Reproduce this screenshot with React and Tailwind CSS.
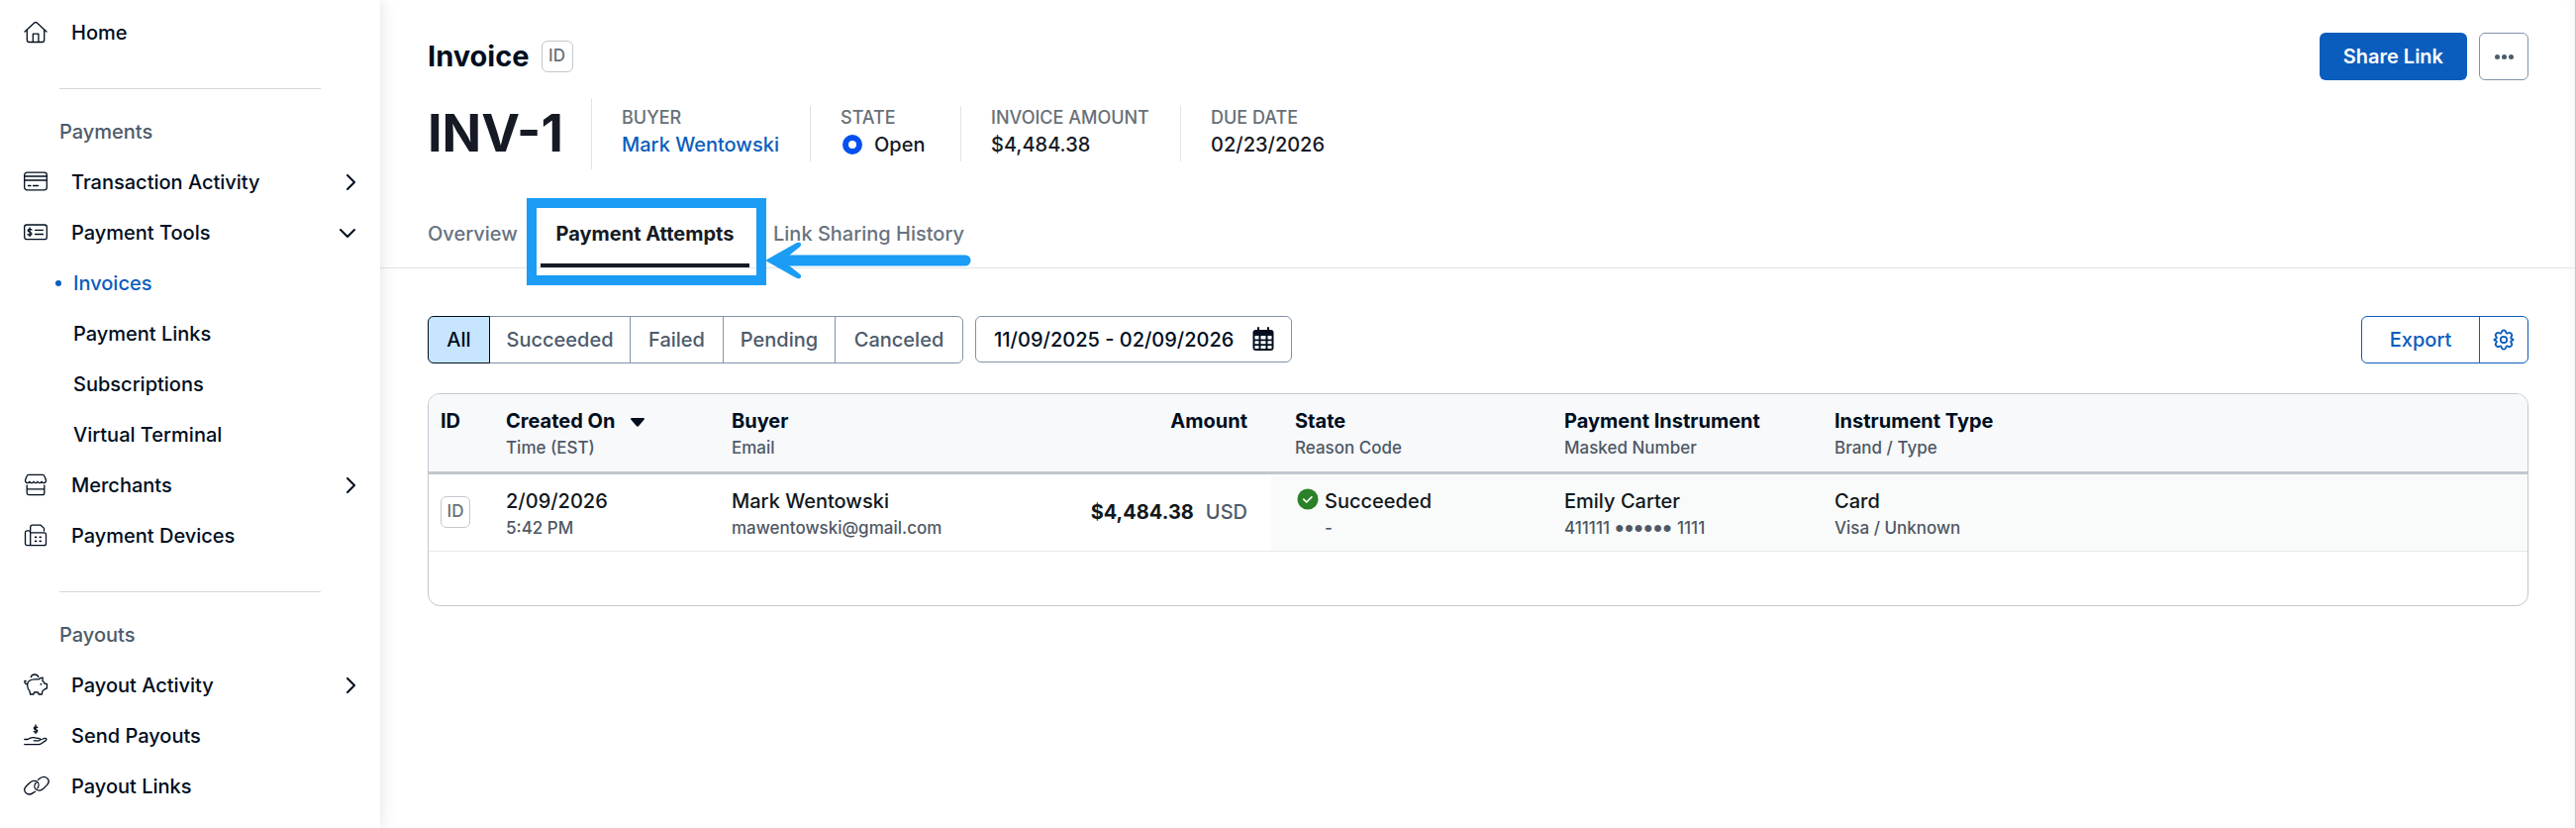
import React from 'react';

const SIDE_ICONS = {
  home: (
    <>
      <path d="M1 11 10.700 2.100a2 2 0 0 1 2.600 0L23 11" />
      <path d="M3.300 9.500v9.800A2.200 2.200 0 0 0 5.500 21.500h13a2.200 2.200 0 0 0 2.200-2.200V9.500" />
      <path d="M9.300 21.200v-8h5.600v8" />
    </>
  ),
  card: (
    <>
      <rect x="0.7" y="2.200" width="22.600" height="17.600" rx="2.500" />
      <path d="M1 6h22M1 10h22M4.500 15.500h2.500M9.500 15.500h5" />
    </>
  ),
  check: (
    <>
      <rect x="0.7" y="4" width="22.600" height="14.600" rx="2.200" />
      <path d="M8 9C7.400 8.100 4.200 7.900 4.200 9.700S8 11 8 12.900s-3.300 1.700-4 .7M6.100 7v8.600" />
      <path d="M11.500 9.300h8M11.500 13.500h8" />
    </>
  ),
  store: (
    <>
      <path d="M5 1.300h14c1 0 1.700.6 2 1.600l1.400 3.700c.4 1.800-.8 3-2.200 3-1 0-1.600-.7-2.100-1.300-.5.700-1.200 1.300-2.100 1.300S14.300 9 13.900 8.300c-.5.700-1.100 1.300-1.900 1.300S10.500 9 10.100 8.300c-.5.700-1.200 1.300-2.100 1.300S6.400 9 5.900 8.300c-.5.700-1.100 1.300-2.100 1.300-1.400 0-2.600-1.200-2.200-3L3 2.900c.3-1 1-1.600 2-1.600Z" />
      <path d="M3.200 12v7.700a2 2 0 0 0 2 2h13.600a2 2 0 0 0 2-2V12M3.200 15.800h17.600" />
    </>
  ),
  device: (
    <>
      <path d="M6.700 21.700H3.500a2 2 0 0 1-2-2V8.800a2 2 0 0 1 2-2h1.200a2 2 0 0 1 2 2v12.900h13.800a2 2 0 0 0 2-2v-8.900a2 2 0 0 0-2-2H6.700" />
      <path d="M6.700 7V3.200a2 2 0 0 1 2-2h8.400l3.400 3.200V7" />
      <path d="M11.700 13.300h.8M16.300 13.300h.8M11.700 17.300h.8M16.300 17.300h.8" strokeWidth="1.800" />
    </>
  ),
  pig: (
    <>
      <path d="M3.600 11.500C3.600 8 6.800 5.800 11.300 5.800h3.900c.9-1 2.300-1.600 4-1.700l-.3 3.200c1 .8 1.700 1.700 2 2.700l2.500.7v4.200l-3 1.400c-.4.700-1 1.300-1.600 1.700l-.4 3h-3.300l-.6-2h-4l-.6 2H6.600l-.7-3.300c-1.500-1.500-2.300-3.500-2.300-6.200Z" />
      <path d="M7.200 3.700C7.800 2 9.200 1 11 1s3.200.9 3.800 2.400M3.600 10.700C2 10.900.7 9.500.8 8.100c.1-.8 1-.9 1.400-.2" />
      <path d="M17.300 10.800h.1" strokeWidth="1.800" />
    </>
  ),
  hand: (
    <>
      <path d="M.8 15.500H4c2-1.500 3.500-1.900 5.500-1.900 1.500 0 2.400.7 4 .7H15c2 0 2 2.500.2 2.500h-5M16.500 16l4.300-1.500c1.800-.4 3 .9 1.500 2.100l-4.600 3.200c-.8.600-1.500.9-2.600.9H.8" />
      <path d="M13.800 3.500C13.200 2.700 10.300 2.500 10.300 4.200s3.500 1 3.500 2.700-3 1.600-3.700.6M12 1v8.500" />
    </>
  ),
  link: (
    <>
      <path d="M11.500 17.300 9.300 18.600c-2.500 1.700-5.300 1.700-7.200-.1-1.800-1.900-1.600-4.700.4-6.700l3.600-3.600c2.300-2.200 5.700-2.600 7.700-.7 1.700 1.700 1.600 4.500-.1 6.400" />
      <path d="m14.500 5.300 1.900-1.500c2.500-1.700 5.500-1.700 7.400.1 1.800 1.900 1.600 4.700-.4 6.700l-3.600 3.600c-2.300 2.200-5.700 2.600-7.700.7-1.700-1.700-1.600-4.500.1-6.400" />
    </>
  ),
};

const SideIcon = ({ name }) => (
  <svg
    viewBox="0 0 24 24"
    className="h-6 w-6 shrink-0 overflow-visible"
    fill="none"
    stroke="currentColor"
    strokeWidth="1.3"
    strokeLinecap="round"
    strokeLinejoin="round"
    aria-hidden="true"
  >
    {SIDE_ICONS[name]}
  </svg>
);

const paymentItems = [
  { icon: 'card', label: 'Transaction Activity', arrow: 'right' },
  { icon: 'check', label: 'Payment Tools', arrow: 'down' },
  { label: 'Invoices', active: true },
  { label: 'Payment Links' },
  { label: 'Subscriptions' },
  { label: 'Virtual Terminal' },
  { icon: 'store', label: 'Merchants', arrow: 'right' },
  { icon: 'device', label: 'Payment Devices' },
];

const payoutItems = [
  { icon: 'pig', label: 'Payout Activity', arrow: 'right' },
  { icon: 'hand', label: 'Send Payouts' },
  { icon: 'link', label: 'Payout Links' },
];

const Arrow = ({ down }) => (
  <svg
    viewBox="0 0 16 16"
    className="h-4 w-4"
    fill="none"
    stroke="currentColor"
    strokeWidth="2"
    strokeLinecap="round"
    strokeLinejoin="round"
    aria-hidden="true"
  >
    <path d={down ? 'm1 5 7 7 7-7' : 'm8 1 7 7-7 7'} />
  </svg>
);

const NavItem = ({ item }) => {
  // Items without an icon are nested under the group above them
  if (!item.icon) {
    return (
      <a
        href="#"
        aria-current={item.active ? 'page' : undefined}
        className={`flex h-[51px] items-center pl-14 ${item.active ? 'text-[#0b5dbd]' : ''}`}
      >
        <span className={`mr-3 h-1.5 w-1.5 rounded-full ${item.active ? 'bg-[#0b5dbd]' : ''}`} />
        {item.label}
      </a>
    );
  }
  return (
    <a href="#" className="flex h-[51px] items-center pr-[25px] pl-6">
      <SideIcon name={item.icon} />
      <span className="ml-6 flex-1">{item.label}</span>
      {item.arrow && <Arrow down={item.arrow === 'down'} />}
    </a>
  );
};

const NavSection = ({ title, items }) => (
  <section>
    <hr className="mx-15 mt-[31px] border-[#d3d8de]" />
    <h2 className="mt-[17px] flex h-[51px] items-center pl-15 font-medium text-[#4d5b6b]">{title}</h2>
    {items.map((item) => (
      <NavItem key={item.label} item={item} />
    ))}
  </section>
);

const IdBadge = ({ className = '' }) => (
  <button
    type="button"
    className={`flex h-8 items-center justify-center rounded-md border border-[#c1c8cd] bg-white text-[17px] text-[#687076] ${className}`}
  >
    ID
  </button>
);

const Stat = ({ label, className = '', children }) => (
  <div className={`h-14 border-l border-[#dfe3ea] pl-[30px] ${className}`}>
    <dt className="text-lg leading-6 text-[#687076]">{label}</dt>
    <dd className="flex h-[30px] items-center text-xl font-medium">{children}</dd>
  </div>
);

const tabs = ['Overview', 'Payment Attempts', 'Link Sharing History'];

const filters = [
  { label: 'All', width: 'w-[63px]' },
  { label: 'Succeeded', width: 'w-[143px]' },
  { label: 'Failed', width: 'w-[95px]' },
  { label: 'Pending', width: 'w-[114px]' },
  { label: 'Canceled', width: 'w-[130px]' },
];

const columns = [
  { title: 'ID', width: 'w-[66px]' },
  { title: 'Created On', sub: 'Time (EST)', sorted: true, width: 'w-[228px]' },
  { title: 'Buyer', sub: 'Email', width: 'w-[319px]' },
  { title: 'Amount', width: 'w-[238px]', pad: 'pr-6 text-right' },
  { title: 'State', sub: 'Reason Code', width: 'w-[284px]', pad: 'pl-6' },
  { title: 'Payment Instrument', sub: 'Masked Number', width: 'w-[273px]' },
  { title: 'Instrument Type', sub: 'Brand / Type' },
];

const SubText = ({ children }) => (
  <div className="text-[17px] leading-[26px] font-medium text-[#4f5865]">{children}</div>
);

const CellText = ({ top, bottom }) => (
  <>
    <div className="text-xl leading-7 font-medium text-[#11181c]">{top}</div>
    <SubText>{bottom}</SubText>
  </>
);

const AttemptsTable = () => (
  <div className="mt-[30px] overflow-hidden rounded-xl border border-[#c1c8cd] pb-[54px]">
    <table className="w-full table-fixed text-left">
      <thead className="border-b-[3px] border-[#c1c8cd] bg-[#f7f9fb]">
        <tr className="h-[79px] align-top">
          {columns.map((col) => (
            <th key={col.title} className={`pt-[13px] ${col.width ?? ''} ${col.pad ?? 'pl-3'}`}>
              <div className="text-xl leading-7 font-bold text-[#000e1e]">
                {col.title}
                {col.sorted && (
                  <svg viewBox="0 0 14 9" className="ml-4 inline h-[9px] w-[14px] align-middle" fill="currentColor" aria-hidden="true">
                    <path d="M1.200 0h11.600c1 0 1.500 1 .8 1.700L8 8.300c-.6.600-1.400.6-2 0L.4 1.700C-.3 1 .2 0 1.200 0Z" />
                  </svg>
                )}
              </div>
              {col.sub && <SubText>{col.sub}</SubText>}
            </th>
          ))}
        </tr>
      </thead>
      <tbody>
        <tr className="h-[79px] border-b border-[#e6e8eb] align-top">
          <td className="pl-3 align-middle">
            <IdBadge className="w-[30px]" />
          </td>
          <td className="pt-[13px] pl-3">
            <CellText top="2/09/2026" bottom="5:42 PM" />
          </td>
          <td className="pt-[13px] pl-3">
            <CellText top="Mark Wentowski" bottom="mawentowski@gmail.com" />
          </td>
          <td className="pr-6 text-right align-middle text-xl text-[#11181c]">
            <span className="font-bold">$4,484.38</span>
            <span className="ml-3 text-[#4d5b6b]">USD</span>
          </td>
          <td className="bg-[#f9fbfa] pt-[13px] pl-[26px]">
            <div className="flex">
              <svg viewBox="0 0 22 22" className="mt-px mr-1.5 h-[22px] w-[22px]" aria-hidden="true">
                <circle cx="11" cy="11" r="10.5" fill="#2b8127" />
                <path d="m6.800 11.200 2.900 2.800 5.200-5.200" fill="none" stroke="#fff" strokeWidth="1.700" strokeLinecap="round" strokeLinejoin="round" />
              </svg>
              <div>
                <CellText top="Succeeded" bottom="-" />
              </div>
            </div>
          </td>
          <td className="bg-[#f9fbfa] pt-[13px] pl-3">
            <div className="text-xl leading-7 font-medium text-[#11181c]">Emily Carter</div>
            <div className="flex items-center text-[17px] leading-[26px] font-medium text-[#4f5865]">
              411111
              <span className="mx-[5px] font-['Liberation_Sans',sans-serif] text-base leading-[26px]">●●●●●●</span>
              1111
            </div>
          </td>
          <td className="bg-[#f9fbfa] pt-[13px] pl-3">
            <CellText top="Card" bottom="Visa / Unknown" />
          </td>
        </tr>
      </tbody>
    </table>
  </div>
);

const App = () => (
  <div className="flex min-h-screen bg-white font-['Inter','Liberation_Sans',sans-serif] text-xl font-medium text-[#000e1e]">
    <nav aria-label="Main" className="z-10 w-96 shrink-0 pt-[7px] shadow-[0_0_16px_rgba(17,50,40,0.14)]">
      <NavItem item={{ icon: 'home', label: 'Home' }} />
      <NavSection title="Payments" items={paymentItems} />
      <NavSection title="Payouts" items={payoutItems} />
    </nav>

    <main className="min-w-0 flex-1 border-r border-[#c1c8cd] pt-[33px] shadow-[inset_-8px_0_8px_-6px_rgba(17,50,40,0.06)]">
      <header className="flex h-12 items-center pr-[47px] pl-12">
        <h1 className="text-[29px] font-bold">Invoice</h1>
        <IdBadge className="ml-3 w-8" />
        <button type="button" className="ml-auto h-12 rounded-md bg-[#0b5dbd] px-6 font-semibold text-white">
          Share Link
        </button>
        <button
          type="button"
          aria-label="More actions"
          className="ml-3 flex h-12 w-[50px] items-center justify-center gap-0.5 rounded-md border border-[#8193ab]"
        >
          <span className="h-[5px] w-[5px] rounded-full bg-[#4d5b6b]" />
          <span className="h-[5px] w-[5px] rounded-full bg-[#4d5b6b]" />
          <span className="h-[5px] w-[5px] rounded-full bg-[#4d5b6b]" />
        </button>
      </header>

      <div className="mt-[18px] flex h-[72px] items-center pl-12 text-[#161a24]">
        <div className="w-[165px] text-[52px] leading-none font-bold">INV-1</div>
        <dl className="flex h-full items-center">
          <div className="flex h-full w-[221px] items-center border-l border-[#dfe3ea]">
            <Stat label="BUYER" className="border-l-0">
              <a href="#" className="text-[#0b5dbd]">Mark Wentowski</a>
            </Stat>
          </div>
          <Stat label="STATE" className="w-[152px]">
            <span className="mr-3 ml-0.5 h-5 w-5 rounded-full border-[6px] border-[#0450f0]" />
            Open
          </Stat>
          <Stat label="INVOICE AMOUNT" className="w-[222px]">$4,484.38</Stat>
          <Stat label="DUE DATE">02/23/2026</Stat>
        </dl>
      </div>

      <div role="tablist" className="mt-7 flex h-[72px] items-stretch border-b border-[#dfe3ea] pl-8">
        {tabs.map((tab) => {
          const active = tab === 'Payment Attempts';
          return (
            <div key={tab} className={`relative flex ${active ? 'mx-2 w-[211px]' : 'min-w-[122px]'}`}>
              <button
                type="button"
                role="tab"
                aria-selected={active}
                className={`flex-1 border-b-4 pt-1.5 whitespace-nowrap ${
                  active ? 'border-[#161a24] text-center font-bold text-[#161a24]' : 'border-transparent pl-4 text-left text-[#687380]'
                }`}
              >
                {tab}
              </button>
              {active && (
                <>
                  <div className="pointer-events-none absolute top-px -right-[17px] -bottom-[18px] -left-[14px] border-10 border-[#1b9cf5]" />
                  <svg viewBox="0 0 208 38" className="pointer-events-none absolute -bottom-3 left-[227px] z-10 h-[38px] w-52" fill="none" aria-hidden="true">
                    <path d="M20 19h182" stroke="#1b9cf5" strokeWidth="11" strokeLinecap="round" />
                    <path
                      d="M0 19 31 1.400c2.500-1.200 4.500-.8 5 .8.400 1.200-.2 2.200-1.400 3.200L24 14v10l10.600 8.600c1.200 1 1.800 2 1.400 3.200-.5 1.600-2.500 2-5 .8Z"
                      fill="#1b9cf5"
                    />
                  </svg>
                </>
              )}
            </div>
          );
        })}
      </div>

      <div className="pt-12 pr-[47px] pl-12">
        <div className="flex items-start">
          <div role="group" aria-label="State filter" className="flex h-12">
            {filters.map((f, i) => (
              <button
                key={f.label}
                type="button"
                aria-pressed={i === 0}
                className={`-ml-px border first:ml-0 first:rounded-l-md last:rounded-r-md ${f.width} ${
                  i === 0 ? 'z-10 border-[#000e1e] bg-[#c7e5ff]' : 'border-[#8193ab] text-[#4d5b6b]'
                }`}
              >
                {f.label}
              </button>
            ))}
          </div>
          <button
            type="button"
            className="ml-3 flex h-[47px] w-80 items-center justify-between rounded-md border border-[#8193ab] pr-[17px] pl-[18px]"
          >
            11/09/2025 - 02/09/2026
            <svg viewBox="0 0 22 24" className="mb-0.5 h-6 w-[22px]" aria-hidden="true">
              <path d="M6 1v4M16 1v4" stroke="currentColor" strokeWidth="2" strokeLinecap="round" />
              <rect x="0.5" y="3" width="21" height="21" rx="3" fill="currentColor" />
              <path
                d="M2.500 9h4v3.500h-4zM8.500 9h5v3.500h-5zM15.500 9h4v3.500h-4zM2.500 14.300h4v3h-4zM8.500 14.300h5v3h-5zM15.500 14.300h4v3h-4zM2.500 19h4v3h-4zM8.500 19h5v3h-5zM15.500 19h4v3h-4z"
                fill="#fff"
              />
            </svg>
          </button>
          <div className="ml-auto flex h-12 text-[#0b5dbd]">
            <button type="button" className="w-[120px] rounded-l-md border border-[#0b5dbd]">Export</button>
            <button
              type="button"
              aria-label="Table settings"
              className="-ml-px flex w-[50px] items-center justify-center rounded-r-md border border-[#0b5dbd]"
            >
              <svg
                viewBox="0 0 24 24"
                className="h-6 w-6"
                fill="none"
                stroke="currentColor"
                strokeWidth="1.8"
                strokeLinejoin="round"
                aria-hidden="true"
              >
                <path d="M9.700 4.600C10 3 10.700 2.300 12 2.300s2 .7 2.300 2.300c.1.800.9 1.200 1.700.8 1.500-.8 2.700-.6 3.600.4.900 1.100 1 2.200-.1 3.400-.6.700-.5 1.400.3 1.700 1.200.4 1.900.5 1.900 1.100s-.7.700-1.900 1.100c-.8.300-.9 1-.3 1.700 1.100 1.200 1 2.300.1 3.400-.9 1-2.100 1.200-3.600.4-.8-.4-1.600 0-1.700.8-.3 1.600-1 2.300-2.300 2.300s-2-.7-2.300-2.300c-.1-.8-.9-1.200-1.700-.8-1.500.8-2.700.6-3.600-.4-.9-1.100-1-2.200.1-3.400.6-.7.5-1.400-.3-1.700-1.200-.4-1.900-.5-1.900-1.100s.7-.7 1.900-1.100c.8-.3.9-1 .3-1.700-1.100-1.200-1-2.300-.1-3.400.9-1 2.100-1.200 3.600-.4.800.4 1.600 0 1.700-.8Z" />
                <circle cx="12" cy="12" r="3.2" />
              </svg>
            </button>
          </div>
        </div>
        <AttemptsTable />
      </div>
    </main>
  </div>
);

export default App;
